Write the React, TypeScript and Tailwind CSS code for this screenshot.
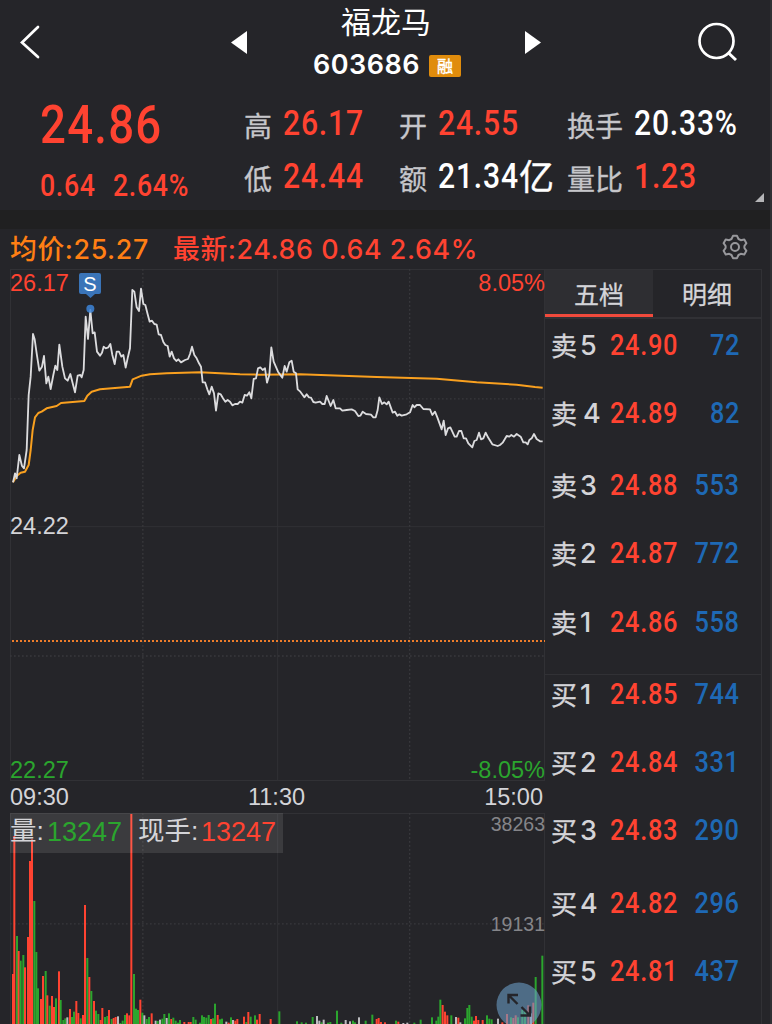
import type { ReactNode } from 'react';
import clsx from 'clsx';

type BarKind = 'r' | 'g' | 'w';

const BAR_FILL: Record<BarKind, string> = {
  r: '#ff4331',
  g: '#2ba52e',
  w: '#bdbdc0',
};

// chart coordinates are in thirds of a pixel
const PRICE =
  '39,787 45,760 50,775 58,705 66,738 72,745 80,690 86,525 92,470 99,342 104,358 110,400 118,452 126,440 132,408 139,490 145,470 152,507 160,465 166,437 172,450 178,374 187,440 195,475 203,482 211,462 218,490 225,517 233,467 241,465 245,472 251,450 257,290 264,357 271,270 278,340 284,337 291,395 300,407 306,398 311,380 317,385 325,382 331,372 337,405 344,432 350,395 357,395 364,410 370,405 377,443 384,410 390,385 397,210 403,215 410,262 417,273 423,206 430,252 436,255 443,283 449,305 456,302 463,312 470,314 476,343 483,345 490,366 496,375 503,378 509,410 515,395 522,415 529,423 535,418 543,427 555,420 564,417 570,402 576,380 583,405 590,415 597,430 603,440 608,487 615,487 622,508 628,523 635,500 642,520 648,572 655,520 662,523 669,535 676,545 683,540 690,545 697,556 705,552 713,552 720,545 727,548 734,525 741,527 748,517 754,535 761,477 768,475 774,445 781,442 788,450 795,445 801,488 808,465 814,382 821,425 834,455 847,473 854,438 860,455 868,427 875,422 881,455 888,460 893,508 901,515 913,532 920,523 927,532 933,533 940,546 947,548 960,545 967,552 974,552 980,528 992,558 1000,540 1007,565 1013,565 1020,565 1027,572 1040,570 1055,568 1065,573 1075,588 1081,587 1088,575 1098,582 1113,584 1120,592 1127,592 1133,570 1138,532 1146,552 1153,547 1160,553 1166,545 1178,578 1185,575 1192,587 1198,583 1205,587 1220,583 1230,577 1238,555 1243,562 1250,555 1260,555 1270,567 1290,568 1297,585 1305,575 1312,592 1325,628 1331,602 1337,645 1344,625 1351,622 1357,635 1364,650 1370,650 1377,633 1384,633 1391,655 1398,655 1405,670 1417,682 1423,663 1430,660 1437,638 1443,658 1450,655 1457,638 1464,652 1477,673 1493,678 1500,675 1508,668 1520,648 1528,650 1534,645 1542,650 1550,642 1562,650 1570,667 1577,667 1583,673 1588,660 1595,655 1602,642 1610,657 1620,664 1628,664';

const AVERAGE =
  '39,787 50,768 62,758 75,755 86,735 92,690 98,630 105,592 115,579 125,575 140,565 170,558 183,549 253,543 262,527 275,515 300,508 390,500 398,478 425,467 450,463 500,460 600,457 720,463 780,464 900,463 1130,471 1310,476 1430,487 1550,494 1605,501 1628,503';

const VOLUME =
  'r39 582,r43 168,g51 468,r56 513,g62 542,g70 525,r75 562,r84 471,r90 243,r96 178,g103 363,g109 516,g114 625,r123 657,r129 588,g137 573,r142 646,g149 677,r156 648,r162 681,g168 655,r177 574,g182 660,g190 720,g196 715,w202 712,r210 687,g216 711,g222 695,r229 663,r235 699,g242 715,r249 705,r255 375,g262 534,r268 591,g274 633,r282 663,g288 692,g295 702,r302 720,r307 684,g315 711,g322 708,r327 690,g335 717,r341 714,r347 711,w354 709,g361 729,g368 722,g375 705,r381 700,r388 706,r394 102,g402 582,g408 686,g414 690,r421 659,g427 698,w433 706,g440 717,g447 711,r455 700,w467 722,g473 723,w480 719,g487 716,g493 702,w500 714,g507 700,r514 717,g520 713,g527 722,g534 728,g540 720,r553 726,r566 726,r572 726,g580 711,g587 719,g600 728,g606 706,g612 711,g619 713,g626 705,r633 717,g639 715,g645 671,r653 705,g660 718,g666 716,w679 725,r686 728,g693 712,w699 720,r706 722,r712 717,r732 710,g739 726,r745 696,g752 710,g765 706,r771 719,r779 702,r812 717,g838 694,g891 724,g905 727,g918 728,g938 711,w951 708,w958 722,g965 727,w971 719,g984 728,g991 726,g1011 692,g1024 728,w1037 720,w1050 724,g1059 722,g1065 727,w1077 712,g1097 722,g1117 704,r1130 717,r1136 714,r1143 726,r1155 727,g1188 722,r1195 725,w1210 729,w1222 728,g1243 728,g1262 719,g1296 712,g1309 722,g1315 710,g1321 659,r1328 675,r1335 695,r1342 706,g1354 706,w1368 711,r1375 713,w1381 727,g1395 715,g1402 684,g1408 675,g1415 710,r1422 722,r1428 708,r1435 720,r1448 720,g1461 706,g1468 716,g1475 718,w1494 716,r1507 727,r1521 702,g1533 712,r1540 714,r1547 706,g1554 712,g1567 690,g1575 692,r1585 676,w1593 700,r1600 668,g1607 591,g1627 527';

const bars = VOLUME.split(',').map((item) => {
  const [x, y] = item.slice(1).split(' ').map(Number);
  return { kind: item[0] as BarKind, x, y };
});

const sells = [
  { side: '卖', level: 5, price: '24.90', volume: 72, height: 'h-[68px]' },
  { side: '卖', level: 4, price: '24.89', volume: 82, height: 'h-[72px]' },
  { side: '卖', level: 3, price: '24.88', volume: 553, height: 'h-[68px]' },
  { side: '卖', level: 2, price: '24.87', volume: 772, height: 'h-[69px]' },
  { side: '卖', level: 1, price: '24.86', volume: 558, height: 'h-[69px]' },
];

const buys = [
  { side: '买', level: 1, price: '24.85', volume: 744, height: 'h-[68px]' },
  { side: '买', level: 2, price: '24.84', volume: 331, height: 'h-[68px]' },
  { side: '买', level: 3, price: '24.83', volume: 290, height: 'h-[73px]' },
  { side: '买', level: 4, price: '24.82', volume: 296, height: 'h-[68px]' },
  { side: '买', level: 5, price: '24.81', volume: 437, height: 'h-[52px]' },
];

// Roboto squeezed to the proportions of a DIN face
function Num({ className, children }: { className?: string; children: ReactNode }) {
  return (
    <span
      className={clsx(
        "inline-block scale-x-[.86] tracking-[0.027em] font-['Roboto',sans-serif] font-medium whitespace-nowrap",
        className
      )}
    >
      {children}
    </span>
  );
}

function Stat({
  label,
  value,
  unit,
  white,
}: {
  label: string;
  value: string;
  unit?: string;
  white?: boolean;
}) {
  return (
    <div className="relative flex h-[53px]">
      <span className="pt-[2px] mr-[11px] text-[28px] leading-[40px] text-[#c6c6ca] whitespace-nowrap [-webkit-text-stroke:0.3px]">
        {label}
      </span>
      <Num
        className={clsx(
          'origin-left mt-px text-[35px] leading-[40px]',
          white ? 'text-white' : 'text-[#ff4331]'
        )}
      >
        {value}
      </Num>
      {unit && (
        <span className="absolute left-[120px] top-[-1px] text-[35px] leading-[40px] text-white [-webkit-text-stroke:0.4px]">
          {unit}
        </span>
      )}
    </div>
  );
}

function Header() {
  return (
    <header className="h-[210px] relative">
      <div className="flex items-start h-[103px]">
        <svg className="w-[20px] h-[34px] ml-[20px] mt-[25px]" viewBox="0 0 20 34">
          <path d="M18 2 L2 17.5 L18 32" fill="none" stroke="#fff" strokeWidth="2.7" strokeLinecap="round" />
        </svg>
        <svg className="w-[16px] h-[23px] ml-[191px] mt-[31px]" viewBox="0 0 16 23">
          <path d="M16 0 V23 L0 11.5Z" fill="#fff" />
        </svg>
        <div className="w-[278px] flex flex-col items-center">
          <div className="h-[39px] text-[30px] leading-[40px] text-white">福龙马</div>
          <div className="flex items-center mt-[10px] pl-[2px] h-[32px]">
            <span className="font-['Inter',sans-serif] font-semibold text-[27px] leading-[32px] tracking-[0.5px] text-white">
              603686
            </span>
            <span className="ml-[9px] mt-[1px] w-[32px] h-[22px] rounded-[2px] bg-[#e08c0c] text-white text-[16px] leading-[20px] text-center [-webkit-text-stroke:0.4px]">
              融
            </span>
          </div>
        </div>
        <svg className="w-[16px] h-[23px] mt-[31px]" viewBox="0 0 16 23">
          <path d="M0 0 L16 11.5 L0 23Z" fill="#fff" />
        </svg>
        <svg className="w-[40px] h-[40px] ml-[157px] mt-[22px]" viewBox="0 0 40 40">
          <circle cx="18.5" cy="19" r="17" fill="none" stroke="#fff" strokeWidth="2.7" />
          <path d="M30.5 31 L38 38" stroke="#fff" strokeWidth="3" />
        </svg>
      </div>

      <div className="flex">
        <div className="w-[244px] pl-[40px] text-[#ff4331]">
          <div className="h-[64px] -mt-px">
            <Num className="origin-left text-[53px] leading-[46px]">24.86</Num>
          </div>
          <div className="flex mt-[2px]">
            <Num className="origin-left w-[73px] text-[31px] leading-[36px]">0.64</Num>
            <Num className="origin-left text-[31px] leading-[36px]">2.64%</Num>
          </div>
        </div>
        <div className="w-[155px]">
          <Stat label="高" value="26.17" />
          <Stat label="低" value="24.44" />
        </div>
        <div className="w-[168px]">
          <Stat label="开" value="24.55" />
          <Stat label="额" value="21.34" unit="亿" white />
        </div>
        <div>
          <Stat label="换手" value="20.33%" white />
          <Stat label="量比" value="1.23" />
        </div>
      </div>

      <svg className="absolute right-[6px] bottom-[8px] w-[9px] h-[9px]" viewBox="0 0 9 9">
        <path d="M9 0 V9 H0Z" fill="#b5b5b8" />
      </svg>
    </header>
  );
}

function PriceChart() {
  return (
    <div className="relative h-[512px] font-['Liberation_Sans',sans-serif] text-[23.5px] leading-[24px]">
      <svg className="block w-[535px] h-[512px]" viewBox="30 147 1605 1536">
        <g stroke="#313135" strokeWidth="3" fill="none">
          <rect x="31.5" y="148.5" width="1602" height="1533" />
          <path d="M833 147 V1683 M30 920 H1635" />
          <path d="M428.5 147 V1683 M1229 147 V1683 M30 536.5 H1635 M30 1308 H1635" stroke="#38383c" strokeWidth="4" strokeDasharray="5 7" />
        </g>
        <path d="M36 1263 H1635" stroke="#ee7d2b" strokeWidth="6" strokeDasharray="6 6" />
        <polyline points={AVERAGE} fill="none" stroke="#f9a01f" strokeWidth="6" strokeLinejoin="round" />
        <polyline points={PRICE} fill="none" stroke="#dcdcde" strokeWidth="5.5" strokeLinejoin="round" />
        <circle cx="271" cy="266" r="12" fill="#3d85d8" fillOpacity="0.85" />
      </svg>
      <span className="absolute left-0 top-[2px] text-[#ff4331]">26.17</span>
      <span className="absolute right-0 top-[2px] text-[#ff4331]">8.05%</span>
      <span className="absolute left-0 top-[245px] text-[#d4d4d8]">24.22</span>
      <span className="absolute left-0 bottom-[-1px] text-[#2ba52e]">22.27</span>
      <span className="absolute right-0 bottom-[-1px] text-[#2ba52e]">-8.05%</span>
      <span className="absolute left-[69px] top-[4px] w-[22px] h-[21px] rounded-[2px] bg-[#3a74b8] text-white text-[20px] leading-[22px] text-center">
        S
      </span>
      <svg className="absolute left-[76px] top-[25px] w-[9px] h-[4px]" viewBox="0 0 9 4">
        <path d="M0 0 H9 L4.5 4Z" fill="#3a74b8" />
      </svg>
    </div>
  );
}

function VolumeChart() {
  return (
    <div className="relative h-[211px] overflow-hidden font-['Liberation_Sans',sans-serif]">
      <svg className="block w-[535px] h-[211px]" viewBox="30 99 1605 633">
        <g stroke="#313135" strokeWidth="3" fill="none">
          <path d="M31.5 99 V732 M1633.5 99 V732 M30 100.5 H1635 M833 99 V732" />
          <path d="M428.5 99 V732 M1229 99 V732 M30 431.5 H1635" stroke="#38383c" strokeWidth="4" strokeDasharray="5 7" />
        </g>
        {bars.map((b) => (
          <rect key={b.x} x={b.x - 3} y={b.y} width="6" height={735 - b.y} fill={BAR_FILL[b.kind]} />
        ))}
      </svg>
      <div className="absolute left-0 top-0 w-[273px] h-[40px] bg-white/10" />
      <div className="absolute left-0 top-px flex h-[36px] items-center text-[26.5px] text-[#d4d4d8] whitespace-nowrap">
        <span className="w-[37px] font-['Liberation_Sans','Noto_Sans_CJK_SC',sans-serif]">量:</span>
        <span className="w-[91px] text-[27px] text-[#2ba52e]">13247</span>
        <span className="w-[63px] font-['Liberation_Sans','Noto_Sans_CJK_SC',sans-serif]">现手:</span>
        <span className="text-[27px] text-[#ff4331]">13247</span>
      </div>
      <span className="absolute right-0 top-0 text-[19.5px] leading-[22px] text-[#858589]">38263</span>
      <span className="absolute right-0 top-[100px] text-[19.5px] leading-[22px] text-[#858589]">19131</span>
      <svg className="absolute left-[486px] top-[169px] w-[46px] h-[46px]" viewBox="0 0 46 46">
        <circle cx="23" cy="23" r="22.5" fill="#6b9cc4" fillOpacity="0.6" />
        <path
          d="M12.5 21.5 V13 H22 M13 13.5 L21.5 22 M34 24.5 V33.5 H24.5 M33.5 33 L25.5 25"
          fill="none"
          stroke="#25252a"
          strokeWidth="2.4"
        />
      </svg>
    </div>
  );
}

function OrderRow({ row }: { row: (typeof sells)[number] }) {
  return (
    <div className={clsx('flex pl-[6px] pr-[22px]', row.height)}>
      <span className="flex items-center w-[60px] h-[36px] mt-[1px] text-[#d4d4d8]">
        <span className="w-[29px] -mt-[4px] text-[26px] [-webkit-text-stroke:0.4px]">{row.side}</span>
        <span
          className={clsx(
            "pt-px font-['Inter',sans-serif] font-medium text-[27px]",
            row.level === 4 && row.side === '卖' && 'pl-[3px]'
          )}
        >
          {row.level}
        </span>
      </span>
      <Num className="origin-left w-[66px] -ml-px text-[29.5px] leading-[36px] text-[#ff4331]">{row.price}</Num>
      <Num className="ml-auto origin-right -mr-px text-[29.5px] leading-[36px] text-[#1e69b5]">
        {row.volume}
      </Num>
    </div>
  );
}

function OrderBook() {
  return (
    <aside className="w-[217px] h-[755px] border-r border-t border-[#313135]">
      <div className="flex h-[49px] text-[25px] leading-[46px] text-center text-[#d4d4d8] border-b-2 border-[#313135]">
        <div className="w-[108px] h-[47px] bg-[#2e2e32] border-b-[3px] border-[#f04a3c] [-webkit-text-stroke:0.3px]">
          五档
        </div>
        <div className="flex-1 [-webkit-text-stroke:0.3px]">明细</div>
      </div>
      <div className="h-[356px] pt-[8px] border-b border-[#313135]">
        {sells.map((r) => (
          <OrderRow key={r.level} row={r} />
        ))}
      </div>
      <div className="pt-[1px]">
        {buys.map((r) => (
          <OrderRow key={r.level} row={r} />
        ))}
      </div>
    </aside>
  );
}

export default function App() {
  return (
    <div className="w-[772px] h-[1024px] overflow-hidden bg-[#252529] border-r-2 border-[#303034] font-['Noto_Sans_CJK_SC',sans-serif]">
      <Header />
      <div className="h-[19px] bg-[#202021]" />
      <div className="flex items-center h-[40px] pl-[10px] font-['Inter','Noto_Sans_CJK_SC',sans-serif] font-medium text-[26.8px] tracking-[0.6px] whitespace-nowrap">
        <span className="w-[163px] text-[#ff7f14]">均价:25.27</span>
        <span className="text-[#ff4331]">最新:24.86 0.64 2.64%</span>
        <svg className="ml-auto mr-[22px] -mt-[4px] w-[26px] h-[26px]" viewBox="0 0 26 26" fill="none" stroke="#98989c" strokeWidth="2" strokeLinejoin="round">
          <path d="M11 1.8 H15 L16.5 5 L18.8 6.2 L22.3 5.6 L24.4 9.2 L22.4 12 V14 L24.4 16.8 L22.3 20.4 L18.8 19.8 L16.5 21 L15 24.2 H11 L9.5 21 L7.2 19.8 L3.7 20.4 L1.6 16.8 L3.6 14 V12 L1.6 9.2 L3.7 5.6 L7.2 6.2 L9.5 5Z" />
          <circle cx="13" cy="13" r="4" />
        </svg>
      </div>
      <div className="flex pl-[10px]">
        <main className="w-[535px]">
          <PriceChart />
          <div className="flex justify-between items-center h-[32px] pt-[2px] pr-[2px] font-['Liberation_Sans',sans-serif] text-[23.5px] text-[#d4d4d8]">
            <span>09:30</span>
            <span>11:30</span>
            <span>15:00</span>
          </div>
          <VolumeChart />
        </main>
        <OrderBook />
      </div>
    </div>
  );
}
